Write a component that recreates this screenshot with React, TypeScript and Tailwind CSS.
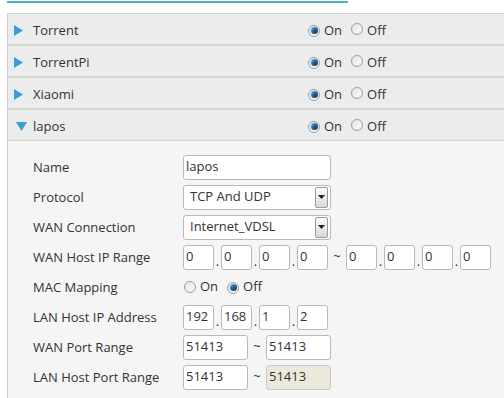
import React from "react";

function Radio({ checked }: { checked: boolean }) {
  return (
    <span className="relative inline-flex w-[12px] h-[12px] rounded-full border border-[#9c9c9c] bg-gradient-to-br from-[#e4e4e4] to-[#fbfbfb] items-center justify-center shrink-0">
      {checked && (
        <span className="w-[7px] h-[7px] rounded-full bg-gradient-to-br from-[#6fb0dd] via-[#1e5f94] to-[#0f3a5e]" />
      )}
    </span>
  );
}

function OnOff({ on }: { on: boolean }) {
  return (
    <div className="flex items-center">
      <Radio checked={on} />
      <span className="ml-[4px]">On</span>
      <span className="ml-[9px]"><Radio checked={!on} /></span>
      <span className="ml-[4px]">Off</span>
    </div>
  );
}

function HeaderRow({ name, open, last }: { name: string; open?: boolean; last?: boolean }) {
  return (
    <div
      className={`flex items-center pt-[3px] bg-[#ececec] border-[#d6d6d6] ${last ? "h-[31px] border-b" : "h-[32px] border-b-2"}`}
    >
      <div className="w-[25px] flex justify-center pl-[1px]">
        {open ? (
          <svg width="11" height="9" viewBox="0 0 11 9">
            <polygon points="0,0 11,0 5.5,9" fill="#3a9fd8" />
          </svg>
        ) : (
          <svg width="9" height="11" viewBox="0 0 9 11" className="mr-[5px]">
            <polygon points="0,0 9,5.5 0,11" fill="#3a9fd8" />
          </svg>
        )}
      </div>
      <div className="w-[275px]">{name}</div>
      <OnOff on={true} />
    </div>
  );
}

function Box({ w, value, disabled }: { w: string; value: string; disabled?: boolean }) {
  return (
    <div
      className={`${w} h-[25px] rounded-[3px] border ${disabled ? "border-[#c9c9c9] bg-[#ebe8dc]" : "border-[#b9b9b9] bg-white"} flex items-center pl-[2px] text-[#333]`}
    >
      {value}
    </div>
  );
}

function Select({ value }: { value: string }) {
  return (
    <div className="w-[148px] h-[25px] rounded-[3px] border border-[#b9b9b9] bg-white flex items-center pl-[6px] pr-[2px] justify-between">
      <span>{value}</span>
      <div className="w-[13px] h-[21px] rounded-[2px] border border-[#9a9a9a] bg-gradient-to-b from-[#fdfdfd] to-[#d8d8d8] flex items-center justify-center">
        <svg width="7" height="4" viewBox="0 0 7 4">
          <polygon points="0,0 7,0 3.5,4" fill="#222" />
        </svg>
      </div>
    </div>
  );
}

function FormRow({ label, children }: { label: string; children: React.ReactNode }) {
  return (
    <div className="flex items-center h-[30px]">
      <div className="w-[175px] pl-[25px] pt-[1px]">{label}</div>
      <div className="flex items-center">{children}</div>
    </div>
  );
}

function Dot() {
  return <span className="w-[7px] text-center self-end leading-[18px]">.</span>;
}

function IpGroup({ vals }: { vals: string[] }) {
  return (
    <div className="flex items-center">
      {vals.map((v, i) => (
        <React.Fragment key={i}>
          {i > 0 && <Dot />}
          <div className="w-[31px] h-[25px] rounded-[3px] border border-[#b9b9b9] bg-white flex items-center pl-[2px]">
            {v}
          </div>
        </React.Fragment>
      ))}
    </div>
  );
}

export default function App() {
  return (
    <div className="w-[504px] h-[398px] bg-white overflow-hidden font-['Open_Sans',sans-serif] text-[13px] text-[#333]">
      <div className="ml-[7px] w-[341px] h-[2px] mt-[1px] bg-[#4bb3c6]" />
      <div className="ml-[7px] mt-[10px] border-l border-t border-[#cfcfcf]">
        <HeaderRow name="Torrent" />
        <HeaderRow name="TorrentPi" />
        <HeaderRow name="Xiaomi" />
        <HeaderRow name="lapos" open last />
        <div className="bg-[#f5f5f5] pt-[11px] pb-[20px]">
          <FormRow label="Name">
            <Box w="w-[148px]" value="lapos" />
          </FormRow>
          <FormRow label="Protocol">
            <Select value="TCP And UDP" />
          </FormRow>
          <FormRow label="WAN Connection">
            <Select value="Internet_VDSL" />
          </FormRow>
          <FormRow label="WAN Host IP Range">
            <IpGroup vals={["0", "0", "0", "0"]} />
            <span className="w-[18px] text-center">~</span>
            <IpGroup vals={["0", "0", "0", "0"]} />
          </FormRow>
          <FormRow label="MAC Mapping">
            <div className="flex items-center pl-[1px]">
              <Radio checked={false} />
              <span className="ml-[4px]">On</span>
              <span className="ml-[9px]"><Radio checked={true} /></span>
              <span className="ml-[4px]">Off</span>
            </div>
          </FormRow>
          <FormRow label="LAN Host IP Address">
            <IpGroup vals={["192", "168", "1", "2"]} />
          </FormRow>
          <FormRow label="WAN Port Range">
            <Box w="w-[65px]" value="51413" />
            <span className="w-[18px] text-center">~</span>
            <Box w="w-[65px]" value="51413" />
          </FormRow>
          <FormRow label="LAN Host Port Range">
            <Box w="w-[65px]" value="51413" />
            <span className="w-[18px] text-center">~</span>
            <Box w="w-[65px]" value="51413" disabled />
          </FormRow>
        </div>
      </div>
    </div>
  );
}
